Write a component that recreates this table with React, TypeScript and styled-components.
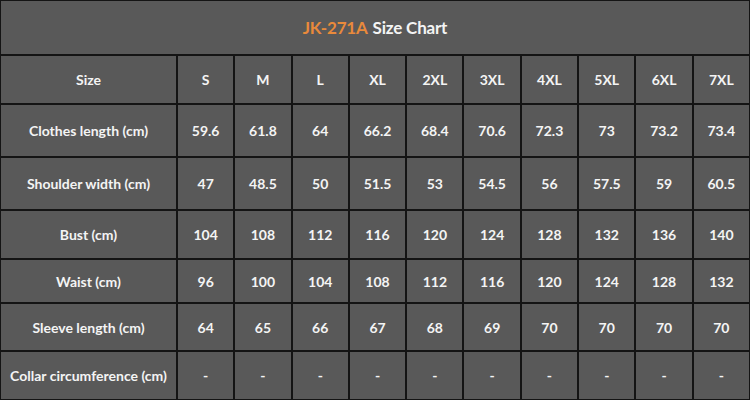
import React from "react";
import styled, { createGlobalStyle } from "styled-components";

const Global = createGlobalStyle`
  html, body { margin: 0; padding: 0; background: #595959; }
  #root { width: 750px; height: 400px; }
`;

const Chart = styled.div`
  display: grid;
  width: 750px;
  height: 400px;
  box-sizing: border-box;
  padding: 1px;
  gap: 2px;
  background: #141414;
  grid-template-columns: 175px repeat(10, 1fr);
  grid-template-rows: 53px 47px 51px 51px 47px 42px 46px 47px;
  font-family: "Lato", "Open Sans", sans-serif;
  font-weight: 700;
  color: #f4f4f4;
`;

const TitleCell = styled.div`
  grid-column: 1 / -1;
  background: #595959;
  display: flex;
  align-items: center;
  justify-content: center;
  font-size: 17px;
  letter-spacing: -0.2px;
  gap: 5px;
`;

const Code = styled.span`
  color: #e98a3b;
`;

const Cell = styled.div<{ $label?: boolean }>`
  background: #595959;
  display: flex;
  align-items: center;
  justify-content: center;
  font-size: 14px;
  white-space: nowrap;
`;

const sizes = ["S", "M", "L", "XL", "2XL", "3XL", "4XL", "5XL", "6XL", "7XL"];
const rows: [string, string[]][] = [
  ["Clothes length (cm)", ["59.6", "61.8", "64", "66.2", "68.4", "70.6", "72.3", "73", "73.2", "73.4"]],
  ["Shoulder width (cm)", ["47", "48.5", "50", "51.5", "53", "54.5", "56", "57.5", "59", "60.5"]],
  ["Bust (cm)", ["104", "108", "112", "116", "120", "124", "128", "132", "136", "140"]],
  ["Waist (cm)", ["96", "100", "104", "108", "112", "116", "120", "124", "128", "132"]],
  ["Sleeve length (cm)", ["64", "65", "66", "67", "68", "69", "70", "70", "70", "70"]],
  ["Collar circumference (cm)", ["-", "-", "-", "-", "-", "-", "-", "-", "-", "-"]],
];

export default function App() {
  return (
    <>
      <Global />
      <Chart>
        <TitleCell>
          <Code>JK-271A</Code>
          <span>Size Chart</span>
        </TitleCell>
        <Cell $label>Size</Cell>
        {sizes.map((s) => (
          <Cell key={s}>{s}</Cell>
        ))}
        {rows.map(([label, vals]) => (
          <React.Fragment key={label}>
            <Cell $label>{label}</Cell>
            {vals.map((v, i) => (
              <Cell key={i}>{v}</Cell>
            ))}
          </React.Fragment>
        ))}
      </Chart>
    </>
  );
}
